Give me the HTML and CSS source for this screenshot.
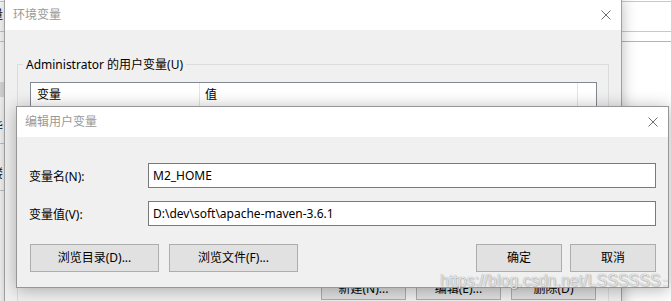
FILE: index.html
```html
<!DOCTYPE html>
<html lang="zh-CN">
<head>
  <meta charset="UTF-8" />
  <title>编辑用户变量</title>
  <link rel="stylesheet" href="styles.css">
</head>

<body>
  <div class="desk">
    <div class="page-lines">
      <div class="page-line first"></div>
      <div class="page-line second"></div>
      <div class="page-line third"></div>
    </div>

    <div class="peek">
      <div class="peek-glyph top">量</div>
      <div class="peek-rule"></div>
      <div class="peek-rule"></div>
      <div class="peek-band"></div>
      <div class="peek-glyph">华</div>
      <div class="peek-rule"></div>
      <div class="peek-glyph">楼</div>
      <div class="peek-rule"></div>
    </div>

    <section class="win env">
      <div class="titlebar">
        <span class="title">环境变量</span>
        <svg class="close" width="10" height="10" viewBox="0 0 10 10">
          <path d="M0.5 0.5 L9.5 9.5 M9.5 0.5 L0.5 9.5" />
        </svg>
      </div>
      <div class="env-body">
        <fieldset class="group">
          <legend>Administrator 的用户变量(U)</legend>
          <div class="list">
            <div class="list-head">
              <div class="col col-name">变量</div>
              <div class="col col-value">值</div>
              <div class="col col-rest"></div>
            </div>
          </div>
          <div class="list-actions">
            <button class="btn">新建(N)...</button>
            <button class="btn">编辑(E)...</button>
            <button class="btn">删除(D)</button>
          </div>
        </fieldset>
      </div>
    </section>

    <section class="win edit">
      <div class="titlebar">
        <span class="title">编辑用户变量</span>
        <svg class="close" width="10" height="10" viewBox="0 0 10 10">
          <path d="M0.5 0.5 L9.5 9.5 M9.5 0.5 L0.5 9.5" />
        </svg>
      </div>
      <div class="edit-body">
        <div class="fields">
          <label class="field-label" for="var-name">变量名(N):</label>
          <input id="var-name" class="field-input" type="text" value="M2_HOME">
          <label class="field-label" for="var-value">变量值(V):</label>
          <input id="var-value" class="field-input" type="text" value="D:\dev\soft\apache-maven-3.6.1">
        </div>
        <div class="edit-actions">
          <div class="btn-group">
            <button class="btn btn-wide">浏览目录(D)...</button>
            <button class="btn btn-wide">浏览文件(F)...</button>
          </div>
          <div class="btn-group right">
            <button class="btn btn-ok">确定</button>
            <button class="btn btn-ok">取消</button>
          </div>
        </div>
      </div>
    </section>

    <div class="watermark">https://blog.csdn.net/LSSSSSS<span class="wm-dots">::</span></div>
  </div>
</body>
</html>
```

FILE: styles.css
```css
* {
  box-sizing: border-box;
  margin: 0;
  padding: 0;
}

body {
  background-color: rgb(255, 255, 255);
  font-family: "Noto Sans", "Noto Sans CJK SC", sans-serif;
  font-size: 12px;
  color: rgb(0, 0, 0);
}

.desk {
  position: relative;
  width: 671px;
  height: 301px;
  overflow: hidden;
}

/* page behind the dialogs */
.page-line {
  height: 1px;
  background-color: rgb(200, 200, 200);
}
.page-line.first {
  margin-top: 1px;
}
.page-line.second {
  margin-top: 29px;
}
.page-line.third {
  margin-top: 9px;
  background-color: rgb(180, 180, 180);
}

.peek {
  position: absolute;
  left: 0;
  top: 0;
  width: 4px;
  height: 301px;
  overflow: hidden;
}
.peek-glyph {
  width: 13px;
  margin-left: -9px;
  height: 14px;
  line-height: 14px;
  margin-top: 23px;
  font-size: 12px;
}
.peek-glyph.top {
  margin-top: 8px;
}
.peek-rule {
  height: 1px;
  margin-top: 9px;
  background-color: rgb(200, 200, 200);
}
.peek-band {
  height: 15px;
  margin-top: 40px;
  background-color: rgb(225, 225, 225);
}

/* windows */
.win {
  position: absolute;
  background-color: rgb(240, 240, 240);
  border: 1px solid rgb(160, 160, 160);
  box-shadow: 0px 0px 14px rgba(0, 0, 0, 0.28);
}

.titlebar {
  height: 30px;
  background-color: rgb(255, 255, 255);
  display: flex;
  align-items: center;
  justify-content: space-between;
  padding-left: 8px;
  padding-right: 10px;
}
.title {
  color: rgb(153, 153, 153);
  font-size: 12px;
  line-height: 16px;
}
.close path {
  stroke: rgb(110, 110, 110);
  stroke-width: 1;
  fill: none;
}

.env {
  left: 4px;
  top: -1px;
  width: 618px;
  height: 330px;
  border-top: none;
}
.env .titlebar {
  height: 31px;
  padding-top: 1px;
}

.env-body {
  padding-left: 12px;
  padding-right: 12px;
  padding-top: 26px;
}

.group {
  border: 1px solid rgb(220, 220, 220);
  padding-left: 12px;
  padding-right: 11px;
  padding-bottom: 10px;
}
.group legend {
  padding-left: 3px;
  padding-right: 3px;
  margin-left: -7px;
  line-height: 17px;
}

.list {
  margin-top: 9px;
  height: 186px;
  background-color: rgb(255, 255, 255);
  border: 1px solid rgb(130, 135, 144);
}
.list-head {
  display: flex;
  height: 24px;
}
.col {
  line-height: 24px;
  border-right: 1px solid rgb(229, 229, 229);
}
.col-name {
  width: 169px;
  padding-left: 6px;
}
.col-value {
  width: 378px;
  padding-left: 5px;
}
.col-rest {
  flex: 1;
  border-right: none;
}

.list-actions {
  display: flex;
  justify-content: flex-end;
  gap: 10px;
  margin-top: 9px;
  padding-right: 1px;
}
.list-actions .btn {
  width: 85px;
  height: 23px;
}

.btn {
  font-family: "Noto Sans", "Noto Sans CJK SC", sans-serif;
  font-size: 12px;
  color: rgb(0, 0, 0);
  background-color: rgb(225, 225, 225);
  border: 1px solid rgb(173, 173, 173);
  line-height: 16px;
}

.edit {
  left: 16px;
  top: 106px;
  width: 653px;
  height: 182px;
  border-color: rgb(150, 150, 150);
  box-shadow: 0px 2px 16px rgba(0, 0, 0, 0.3);
}

.edit-body {
  padding-top: 26px;
  padding-left: 12px;
  padding-right: 12px;
}

.fields {
  display: grid;
  grid-template-columns: 119px 1fr;
  grid-auto-rows: 25px;
  row-gap: 13px;
  align-items: center;
}
.field-input {
  height: 25px;
  border: 1px solid rgb(122, 122, 122);
  background-color: rgb(255, 255, 255);
  padding-left: 4px;
  font-family: "Noto Sans", "Noto Sans CJK SC", sans-serif;
  font-size: 12px;
  color: rgb(0, 0, 0);
  outline: none;
}

.edit-actions {
  display: flex;
  justify-content: space-between;
  margin-top: 18px;
  padding-left: 1px;
}
.btn-group {
  display: flex;
  gap: 10px;
}
.btn-group.right {
  gap: 8px;
}
.btn-wide {
  width: 129px;
  height: 28px;
}
.btn-ok {
  width: 86px;
  height: 28px;
}

.watermark {
  position: absolute;
  left: 440px;
  top: 272px;
  font-family: "Liberation Sans", Arial, sans-serif;
  font-size: 16px;
  line-height: 18px;
  color: rgba(255, 255, 255, 0.75);
  text-shadow: 0px 0px 1px rgba(0, 0, 0, 0.45), 1px 1px 1px rgba(0, 0, 0, 0.15);
  white-space: nowrap;
}
.wm-dots {
  font-size: 10px;
  margin-left: 2px;
}
```
